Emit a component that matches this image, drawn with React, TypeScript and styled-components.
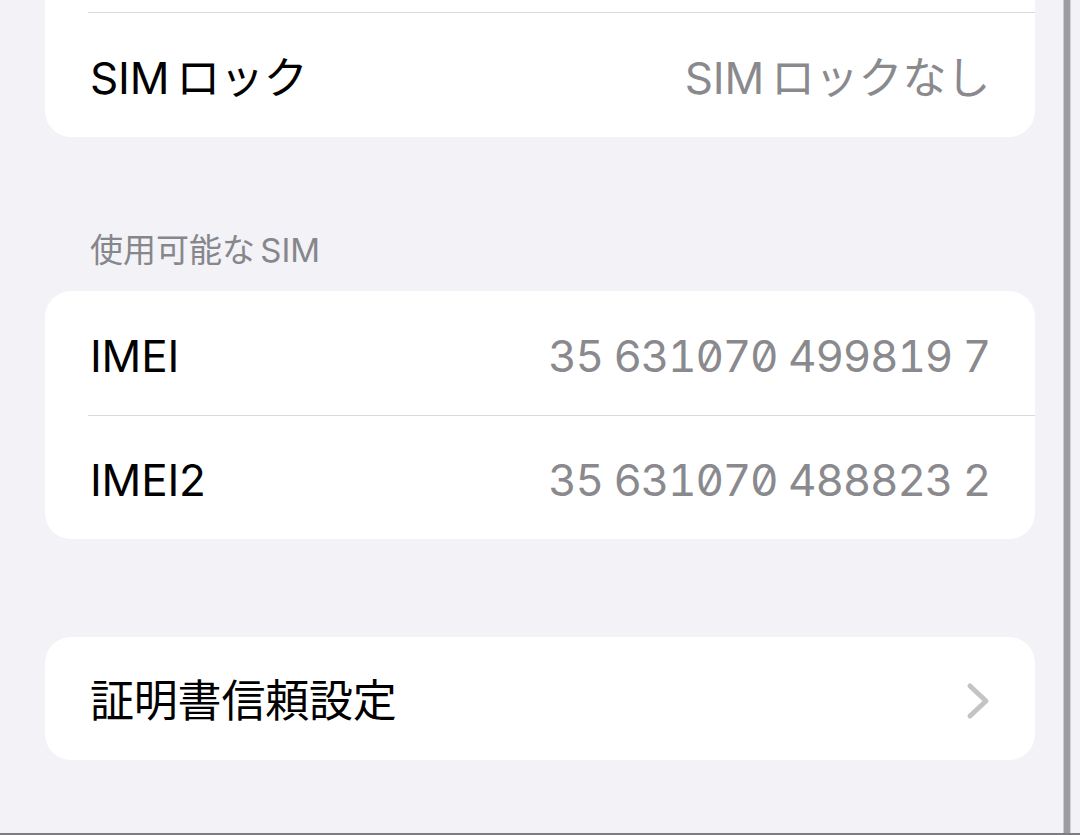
import React from "react";
import styled, { createGlobalStyle } from "styled-components";

const GlobalStyle = createGlobalStyle`
  html, body {
    margin: 0;
    padding: 0;
    background: #f2f2f7;
  }
  body {
    font-family: "Inter", "Noto Sans CJK JP", sans-serif;
    -webkit-font-smoothing: antialiased;
  }
`;

const Frame = styled.div`
  display: flex;
  flex-direction: column;
  width: 1080px;
  height: 835px;
  overflow: hidden;
  background: #f2f2f7;
`;

const Viewport = styled.div`
  display: flex;
  flex-direction: row;
  height: 833px;
`;

const Content = styled.div`
  width: 1063px;
  display: flex;
  flex-direction: column;
  padding: 0 28px 0 45px;
  box-sizing: border-box;
`;

const Rail = styled.div`
  width: 8px;
  box-sizing: border-box;
  background: #9c9ca1;
  border-left: 1px solid #c9c9ce;
  border-right: 1px solid #d2d2d6;
`;

const Gutter = styled.div`
  flex: 1;
  background: #f2f2f7;
`;

const BottomEdge = styled.div`
  height: 2px;
  background: #7d7d82;
`;

const Card = styled.section<{ $continued?: boolean; $gap?: number }>`
  background: #ffffff;
  border-radius: ${(p) => (p.$continued ? "0 0 26px 26px" : "26px")};
  padding-top: ${(p) => (p.$continued ? "12px" : "0")};
  margin-top: ${(p) => p.$gap ?? 0}px;
  display: flex;
  flex-direction: column;
`;

const Row = styled.div<{ $divider?: boolean; $h?: number }>`
  position: relative;
  height: ${(p) => p.$h ?? 124}px;
  display: flex;
  align-items: center;
  justify-content: space-between;
  padding: 5px 45px 0 45px;
  box-sizing: border-box;
  border-top: ${(p) => (p.$divider ? "1px solid transparent" : "0")};

  &::before {
    content: "";
    display: ${(p) => (p.$divider ? "block" : "none")};
    position: absolute;
    top: -1px;
    left: 43px;
    right: 0;
    height: 1px;
    background: #d9d9dd;
  }
`;

const Label = styled.span`
  font-size: 44px;
  line-height: 52px;
  color: #000000;
  letter-spacing: -0.2px;
`;

const Value = styled.span<{ $digits?: boolean }>`
  font-size: 44px;
  line-height: 52px;
  color: #8a8a8e;
  font-feature-settings: ${(p) => (p.$digits ? '"tnum", "zero"' : "normal")};
  letter-spacing: ${(p) => (p.$digits ? "-1.2px" : "-0.2px")};
`;

const Latin = styled.span`
  margin-left: 0.16em;
`;

const SectionHeader = styled.h3`
  margin: 93px 0 21px 45px;
  font-size: 33px;
  line-height: 40px;
  font-weight: 400;
  color: #86868b;
`;

const Chevron = () => (
  <svg width="24" height="38" viewBox="0 0 24 38" fill="none">
    <path
      d="M4 4 L20 19 L4 34"
      stroke="#c4c4c7"
      strokeWidth="5"
      strokeLinecap="round"
      strokeLinejoin="round"
    />
  </svg>
);

export default function App() {
  return (
    <>
      <GlobalStyle />
      <Frame>
        <Viewport>
          <Content>
            <Card $continued>
              <Row $divider $h={125}>
                <Label>
                  SIM<Latin>ロック</Latin>
                </Label>
                <Value>
                  SIM<Latin>ロックなし</Latin>
                </Value>
              </Row>
            </Card>

            <SectionHeader>
              使用可能な<Latin>SIM</Latin>
            </SectionHeader>
            <Card>
              <Row>
                <Label>IMEI</Label>
                <Value $digits>35 631070 499819 7</Value>
              </Row>
              <Row $divider>
                <Label>IMEI2</Label>
                <Value $digits>35 631070 488823 2</Value>
              </Row>
            </Card>

            <Card $gap={98}>
              <Row $h={123}>
                <Label>証明書信頼設定</Label>
                <Chevron />
              </Row>
            </Card>
          </Content>
          <Rail />
          <Gutter />
        </Viewport>
        <BottomEdge />
      </Frame>
    </>
  );
}
